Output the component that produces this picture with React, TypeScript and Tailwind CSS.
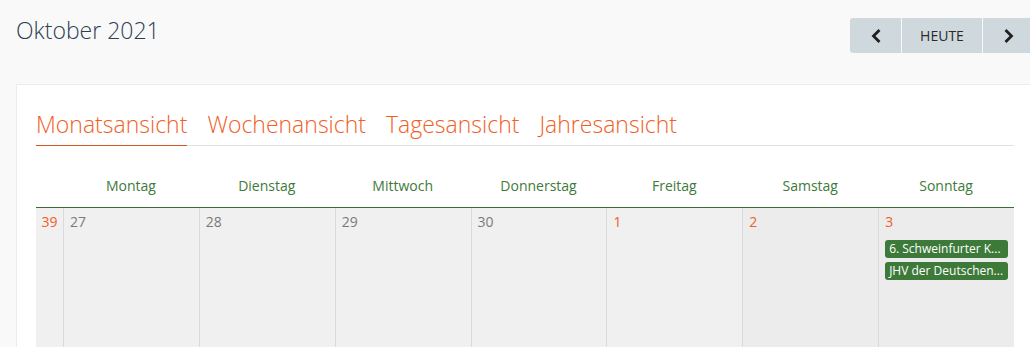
import React from 'react';

const days = ['Montag', 'Dienstag', 'Mittwoch', 'Donnerstag', 'Freitag', 'Samstag', 'Sonntag'];

const cells = [
  { n: '27', muted: true },
  { n: '28', muted: true },
  { n: '29', muted: true },
  { n: '30', muted: true },
  { n: '1', muted: false },
  { n: '2', muted: false, weekend: true },
  { n: '3', muted: false, weekend: true, events: ['6. Schweinfurter K...', 'JHV der Deutschen...'] },
];

const Chevron = ({ dir }: { dir: 'left' | 'right' }) => (
  <svg width="10" height="14" viewBox="0 0 10 14" fill="none">
    <path
      d={dir === 'left' ? 'M7.5 2 L2.5 7 L7.5 12' : 'M2.5 2 L7.5 7 L2.5 12'}
      stroke="#1f1f1f"
      strokeWidth="2.8"
      strokeLinecap="square"
    />
  </svg>
);

export default function App() {
  return (
    <div className="w-full h-[347px] overflow-hidden bg-[#f9f9f9]" style={{ fontFamily: '"Open Sans", "Liberation Sans", sans-serif' }}>
      <div className="w-[1050px] px-4">
        {/* Top bar */}
        <div className="flex items-start justify-between h-[84px]">
          <h1 className="pt-[13px] text-[23px] leading-[34px] font-light text-[#2d3e50]">Oktober 2021</h1>
          <div className="mt-[18px] flex h-[35px] text-[14px] text-[#2a2a2a]">
            <button className="w-[51px] flex items-center justify-center bg-[#cfd8dc] rounded-l-[3px]">
              <Chevron dir="left" />
            </button>
            <button className="w-[80px] ml-px flex items-center justify-center bg-[#cfd8dc] uppercase">Heute</button>
            <button className="w-[51px] ml-px flex items-center justify-center bg-[#cfd8dc] rounded-r-[3px]">
              <Chevron dir="right" />
            </button>
          </div>
        </div>

        {/* Card */}
        <div className="bg-white border-t border-l border-[#e9edf3] pl-[19px] pr-5 pt-[22px]">
          <div className="flex gap-5 border-b border-[#e2e2e2] text-[23px] leading-[34px] font-light text-[#f0601f]">
            <span className="border-b border-[#d9531e] -mb-px pb-[4px]">Monatsansicht</span>
            <span>Wochenansicht</span>
            <span>Tagesansicht</span>
            <span>Jahresansicht</span>
          </div>

          <div className="grid grid-cols-[27px_repeat(7,1fr)] border-b border-[#3d6b38] text-[14px] leading-5 text-[#3e7a3a]">
            <div />
            {days.map((d) => (
              <div key={d} className="pt-[30px] pb-[11px] text-center">{d}</div>
            ))}
          </div>

          <div className="grid grid-cols-[27px_repeat(7,1fr)] h-[160px] text-[14px] leading-5">
            <div className="bg-[#f0f0f0] pt-[4px] text-center text-[#f0601f]">39</div>
            {cells.map((c) => (
              <div
                key={c.n}
                className={`border-l border-[#dadada] pt-[4px] px-[6px] ${c.weekend ? 'bg-[#ececec]' : 'bg-[#f0f0f0]'}`}
              >
                <div className={c.muted ? 'text-[#7a7a7a]' : 'text-[#f0601f]'}>{c.n}</div>
                {c.events && (
                  <div className="mt-[8px] flex flex-col gap-[4px]">
                    {c.events.map((e) => (
                      <div key={e} className="h-[18px] rounded-[3px] bg-[#3d7a3a] px-[4px] text-[12px] leading-[18px] text-white whitespace-nowrap overflow-hidden">
                        {e}
                      </div>
                    ))}
                  </div>
                )}
              </div>
            ))}
          </div>
        </div>
      </div>
    </div>
  );
}
